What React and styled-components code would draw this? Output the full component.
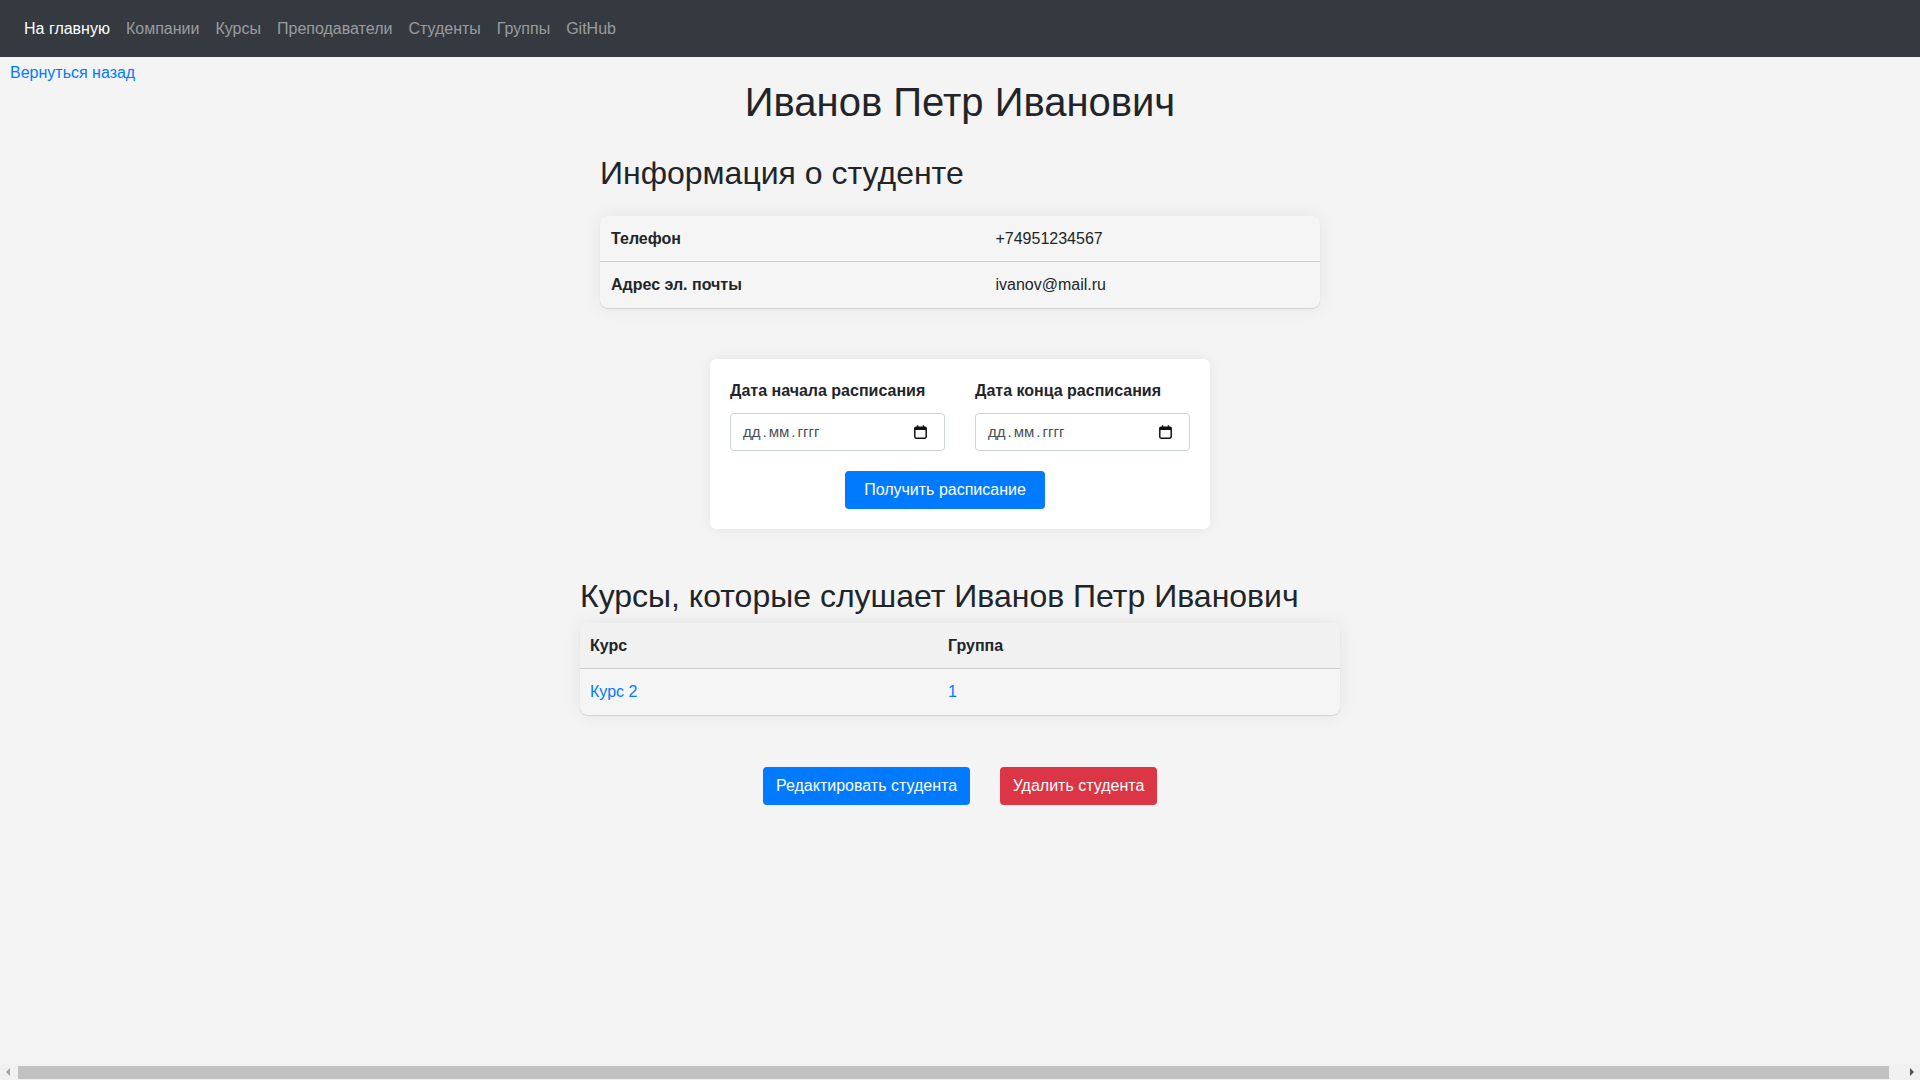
import styled, { createGlobalStyle } from "styled-components";

const GlobalStyle = createGlobalStyle`
    html, body {
        margin: 0;
        padding: 0;
        background: #f4f4f4;
    }
    body {
        font-family: "Liberation Sans", Arial, sans-serif;
        font-size: 16px;
        line-height: 1.5;
        color: #212529;
        overflow: hidden;
    }
    * { box-sizing: border-box; }
`;

const Navbar = styled.nav`
    background-color: #343a40;
    height: 57px;
    padding: 0 16px;
    display: flex;
    align-items: center;
`;
const NavLink = styled.a`
    padding: 8px;
    color: ${props => props.active ? '#ffffff' : 'rgba(255, 255, 255, 0.5)'};
    text-decoration: none;
    font-size: 16px;
    line-height: 24px;
`;
const BackLink = styled.a`
    display: block;
    padding: 0 0 0 10px;
    height: 21px;
    line-height: 32px;
    color: #007bff;
    text-decoration: none;
`;
const Main = styled.main`
    display: flex;
    flex-direction: column;
    align-items: center;
`;
const Title = styled.h1`
    margin: 0;
    font-size: 40px;
    font-weight: 500;
    line-height: 48px;
    color: #212529;
`;
const Section = styled.section`
    width: ${props => props.width}px;
    margin-top: ${props => props.top}px;
`;
const Heading = styled.h2`
    margin: 0 0 ${props => props.gap}px;
    font-size: 32px;
    font-weight: 500;
    line-height: 38px;
    color: #212529;
`;
const Table = styled.table`
    width: 100%;
    border-collapse: separate;
    border-spacing: 0;
    background: #f5f5f5;
    border-radius: 8px;
    box-shadow: 0 0 18px rgba(0, 0, 0, 0.07), 0 1px 1px rgba(0, 0, 0, 0.12);
    overflow: hidden;
`;
const Th = styled.th`
    text-align: left;
    font-weight: bold;
    padding: 0 10px;
    height: 46px;
    background: #f1f1f1;
    border-bottom: 1px solid #cccccc;
    width: ${props => props.w || 'auto'};
`;
const Td = styled.td`
    padding: 0 ${props => props.pad || 11}px;
    height: 46px;
    font-weight: ${props => props.bold ? 'bold' : 'normal'};
    border-bottom: ${props => props.last ? 'none' : '1px solid #cccccc'};
    width: ${props => props.w || 'auto'};
`;
const Link = styled.a`
    color: #007bff;
    text-decoration: none;
`;
const Card = styled.form`
    width: 500px;
    margin-top: 51px;
    padding: 20px;
    background: #ffffff;
    border-radius: 6px;
    box-shadow: 0 0 12px rgba(0, 0, 0, 0.07);
    display: flex;
    flex-direction: column;
    align-items: center;
    gap: 20px;
`;
const Fields = styled.div`
    width: 100%;
    display: grid;
    grid-template-columns: 1fr 1fr;
    gap: 30px;
`;
const Field = styled.label`
    display: flex;
    flex-direction: column;
    gap: 10px;
    font-weight: bold;
    line-height: 24px;
`;
const DateBox = styled.div`
    height: 38px;
    border: 1px solid #ced4da;
    border-radius: 4px;
    background: #ffffff;
    padding: 0 17px 0 12px;
    display: flex;
    align-items: center;
    justify-content: space-between;
    font-weight: normal;
    font-size: 15px;
    color: #495057;
`;
const DateSep = styled.span`
    margin: 0 2px;
`;
const Button = styled.button`
    font-family: inherit;
    font-size: 16px;
    line-height: 24px;
    padding: 6px 12px;
    border: none;
    border-radius: 4px;
    color: #ffffff;
    background-color: ${props => props.danger ? '#dc3545' : '#007bff'};
    width: ${props => props.width}px;
    height: 38px;
    cursor: pointer;
`;
const ButtonRow = styled.div`
    display: flex;
    justify-content: center;
    padding-right: ${props => props.shift || 0}px;
    gap: 30px;
    margin-top: ${props => props.top || 0}px;
    width: 100%;
`;
const Scrollbar = styled.div`
    position: fixed;
    left: 0;
    right: 0;
    bottom: 0;
    height: 16px;
    background: #f1f1f1;
    display: flex;
    align-items: center;
    gap: 5px;
    padding: 0 6px;
`;
const ScrollThumb = styled.div`
    flex: 1;
    height: 13px;
    margin: 1px 16px 0 3px;
    background: #c1c1c1;
`;
const Arrow = styled.div`
    width: 0;
    height: 0;
    border-top: 4px solid transparent;
    border-bottom: 4px solid transparent;
    ${props => props.right
        ? 'border-left: 4px solid #505050;'
        : 'border-right: 4px solid #a3a3a3;'}
`;

const CalendarIcon = () => (
    <svg width="13" height="14" viewBox="0 0 13 14">
        <rect x="0.8" y="2.2" width="11.4" height="11" rx="1.4" fill="none" stroke="#111" strokeWidth="1.5" />
        <rect x="0.8" y="2.2" width="11.4" height="2.8" fill="#111" />
        <rect x="2.8" y="0.3" width="1.5" height="2.6" fill="#111" />
        <rect x="8.7" y="0.3" width="1.5" height="2.6" fill="#111" />
    </svg>
);

const DatePlaceholder = () => (
    <span>дд<DateSep>.</DateSep>мм<DateSep>.</DateSep>гггг</span>
);

const NAV = ['На главную', 'Компании', 'Курсы', 'Преподаватели', 'Студенты', 'Группы', 'GitHub'];

export default function App() {
    return (
        <>
            <GlobalStyle />
            <Navbar>
                {NAV.map((item, i) => (
                    <NavLink key={item} href="#" active={i === 0}>{item}</NavLink>
                ))}
            </Navbar>
            <BackLink href="#">Вернуться назад</BackLink>
            <Main>
                <Title>Иванов Петр Иванович</Title>

                <Section width={720} top={28}>
                    <Heading gap={24}>Информация о студенте</Heading>
                    <Table>
                        <tbody>
                            <tr>
                                <Td bold w="53.4%">Телефон</Td>
                                <Td>+74951234567</Td>
                            </tr>
                            <tr>
                                <Td bold last>Адрес эл. почты</Td>
                                <Td last>ivanov@mail.ru</Td>
                            </tr>
                        </tbody>
                    </Table>
                </Section>

                <Card onSubmit={e => e.preventDefault()}>
                    <Fields>
                        <Field>
                            Дата начала расписания
                            <DateBox><DatePlaceholder /><CalendarIcon /></DateBox>
                        </Field>
                        <Field>
                            Дата конца расписания
                            <DateBox><DatePlaceholder /><CalendarIcon /></DateBox>
                        </Field>
                    </Fields>
                    <ButtonRow shift={30}>
                        <Button width={200}>Получить расписание</Button>
                    </ButtonRow>
                </Card>

                <Section width={760} top={48}>
                    <Heading gap={8}>Курсы, которые слушает Иванов Петр Иванович</Heading>
                    <Table>
                        <thead>
                            <tr>
                                <Th w="47.1%">Курс</Th>
                                <Th>Группа</Th>
                            </tr>
                        </thead>
                        <tbody>
                            <tr>
                                <Td last pad={10}><Link href="#">Курс 2</Link></Td>
                                <Td last pad={10}><Link href="#">1</Link></Td>
                            </tr>
                        </tbody>
                    </Table>
                </Section>

                <ButtonRow top={52}>
                    <Button width={207}>Редактировать студента</Button>
                    <Button danger width={157}>Удалить студента</Button>
                </ButtonRow>
            </Main>
            <Scrollbar>
                <Arrow />
                <ScrollThumb />
                <Arrow right />
            </Scrollbar>
        </>
    );
}
